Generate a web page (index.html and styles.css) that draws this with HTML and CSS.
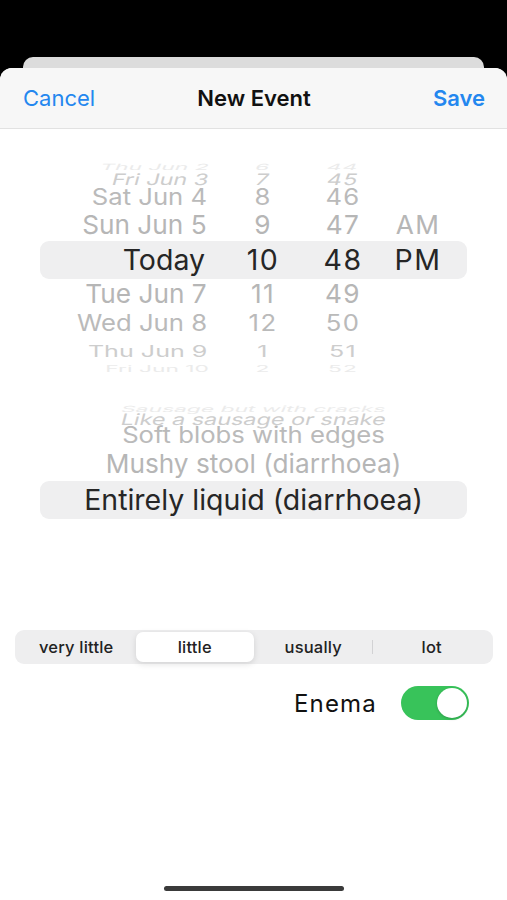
FILE: index.html
```html
<!DOCTYPE html>
<html lang="en">
<head>
  <meta charset="UTF-8">
  <meta name="viewport" content="width=device-width, initial-scale=1.0">
  <title>New Event</title>
  <link rel="stylesheet" href="styles.css">
</head>
<body>
  <div class="back-card"></div>
  <div class="sheet">
    <!-- Navigation bar -->
    <div class="navbar">
      <span class="nav-btn">Cancel</span>
      <span class="nav-title">New Event</span>
      <span class="nav-btn bold right">Save</span>
    </div>

    <!-- Date / time wheel -->
    <div class="picker date-picker">
      <div class="row r4 up"><span class="c-date">Thu Jun 2</span><span class="c-num">6</span><span class="c-num">44</span><span></span></div>
      <div class="row r3 up"><span class="c-date">Fri Jun 3</span><span class="c-num">7</span><span class="c-num">45</span><span></span></div>
      <div class="row r2"><span class="c-date">Sat Jun 4</span><span class="c-num">8</span><span class="c-num">46</span><span></span></div>
      <div class="row r1"><span class="c-date">Sun Jun 5</span><span class="c-num">9</span><span class="c-num">47</span><span class="c-num">AM</span></div>
      <div class="row r0 selected"><span class="c-date">Today</span><span class="c-num">10</span><span class="c-num">48</span><span class="c-num">PM</span></div>
      <div class="row r1b"><span class="c-date">Tue Jun 7</span><span class="c-num">11</span><span class="c-num">49</span><span></span></div>
      <div class="row r2b"><span class="c-date">Wed Jun 8</span><span class="c-num">12</span><span class="c-num">50</span><span></span></div>
      <div class="row r3b"><span class="c-date">Thu Jun 9</span><span class="c-num">1</span><span class="c-num">51</span><span></span></div>
      <div class="row r4b"><span class="c-date">Fri Jun 10</span><span class="c-num">2</span><span class="c-num">52</span><span></span></div>
    </div>

    <!-- Stool type wheel -->
    <div class="picker type-picker">
      <div class="row r4 up"><span>Sausage but with cracks</span></div>
      <div class="row r3 up"><span>Like a sausage or snake</span></div>
      <div class="row r2"><span>Soft blobs with edges</span></div>
      <div class="row r1"><span>Mushy stool (diarrhoea)</span></div>
      <div class="row r0 selected"><span>Entirely liquid (diarrhoea)</span></div>
    </div>

    <!-- Amount -->
    <div class="segmented">
      <div class="seg">very little</div>
      <div class="seg active">little</div>
      <div class="seg divider">usually</div>
      <div class="seg">lot</div>
    </div>

    <div class="toggle-row">
      <span class="toggle-label">Enema</span>
      <div class="switch on"><div class="knob"></div></div>
    </div>

    <div class="home-indicator"></div>
  </div>
</body>
</html>
```

FILE: styles.css
```css
body {
  margin: 0;
  background: #000;
  font-family: Inter, "Noto Sans", sans-serif;
  height: 900px;
  overflow: hidden;
}

.back-card {
  margin: 57px 23px 0;
  height: 11px;
  background: #dcdcdc;
  border-radius: 10px 10px 0 0;
}

.sheet {
  background: #fff;
  border-radius: 12px 12px 0 0;
  height: 832px;
  display: flex;
  flex-direction: column;
}

.navbar {
  height: 60px;
  background: #f7f7f7;
  border-bottom: 1px solid #e2e2e2;
  border-radius: 12px 12px 0 0;
  display: grid;
  grid-template-columns: 1fr auto 1fr;
  align-items: center;
  padding: 0 22px 0 23px;
  font-size: 22px;
}

.nav-btn {
  color: #2487ef;
}

.nav-btn.bold {
  font-weight: 600;
}

.nav-btn.right {
  text-align: right;
}

.nav-title {
  font-weight: 600;
  color: #111;
}

/* Wheel pickers */
.picker {
  margin: 0 40px;
  display: flex;
  flex-direction: column;
}

.date-picker {
  margin-top: 24px;
}

.type-picker {
  margin-top: 30px;
}

.row {
  --sx: 1;
  --sy: 1;
  --sk: 0deg;
  display: grid;
  align-items: center;
  font-size: 28.5px;
  color: #b6b6b6;
  white-space: nowrap;
}

.row span {
  display: block;
  line-height: 1;
  transform: scale(var(--sx), var(--sy)) skewX(var(--sk));
}

.date-picker .row {
  grid-template-columns: 185px 76px 84px 66px;
}

.date-picker .c-date {
  text-align: right;
  padding-right: 20px;
  transform-origin: right center;
}

.c-num {
  text-align: center;
  letter-spacing: 1.5px;
}

.type-picker .row {
  grid-template-columns: 1fr;
  text-align: center;
}

.row.selected {
  background: #efeff0;
  border-radius: 9px;
  color: #262626;
  height: 38px;
}

/* rows get flatter and paler away from the centre */
.r4, .r4b { height: 12px; color: #ebebeb; --sx: 0.8; --sy: 0.3; }
.r3, .r3b { height: 18px; color: #cdcdcd; --sx: 0.82; --sy: 0.55; }
.r2, .r2b { color: #bababa; --sx: 0.9; --sy: 0.78; }
.r1, .r1b { --sx: 0.92; --sy: 0.92; }
.r2 { height: 26px; }
.r1 { height: 32px; }
.r1b { height: 30px; }
.r2b { height: 28px; }
.r4b { height: 10px; }
.r3b { --sx: 0.88; }

.up { --sk: -10deg; }

.type-picker .r4 { height: 10px; }
.type-picker .r3 { height: 16px; }
.type-picker .r2 { height: 27px; }
.type-picker .r1 { height: 33px; }

/* Segmented control */
.segmented {
  margin: 111px 14px 0 15px;
  background: #eeeeef;
  border-radius: 9px;
  padding: 2px;
  display: flex;
  height: 30px;
}

.seg {
  flex: 1;
  display: flex;
  align-items: center;
  justify-content: center;
  font-size: 16.5px;
  font-weight: 500;
  color: #222;
  border-radius: 7px;
  letter-spacing: 0.2px;
}

.seg.active {
  background: #fff;
  box-shadow: 0 2px 6px rgba(0, 0, 0, 0.12);
}

.seg.divider {
  position: relative;
}

.seg.divider::after {
  content: "";
  position: absolute;
  right: 0;
  top: 8px;
  bottom: 8px;
  width: 1px;
  background: #d2d2d4;
}

/* Enema toggle */
.toggle-row {
  margin-top: 22px;
  display: flex;
  justify-content: flex-end;
  align-items: center;
  gap: 24px;
  padding-right: 38px;
}

.toggle-label {
  font-size: 24px;
  letter-spacing: 1.2px;
  color: #111;
}

.switch {
  width: 68px;
  height: 34px;
  border-radius: 17px;
  background: #e5e5ea;
  display: flex;
  align-items: center;
  padding: 0 2px;
  box-sizing: border-box;
}

.switch.on {
  background: #38c35a;
  justify-content: flex-end;
}

.knob {
  width: 30px;
  height: 30px;
  border-radius: 50%;
  background: #fff;
  box-shadow: 0 1px 3px rgba(0, 0, 0, 0.2);
}

.home-indicator {
  margin: auto auto 9px;
  width: 180px;
  height: 5px;
  border-radius: 3px;
  background: #3a3a3a;
}
```
